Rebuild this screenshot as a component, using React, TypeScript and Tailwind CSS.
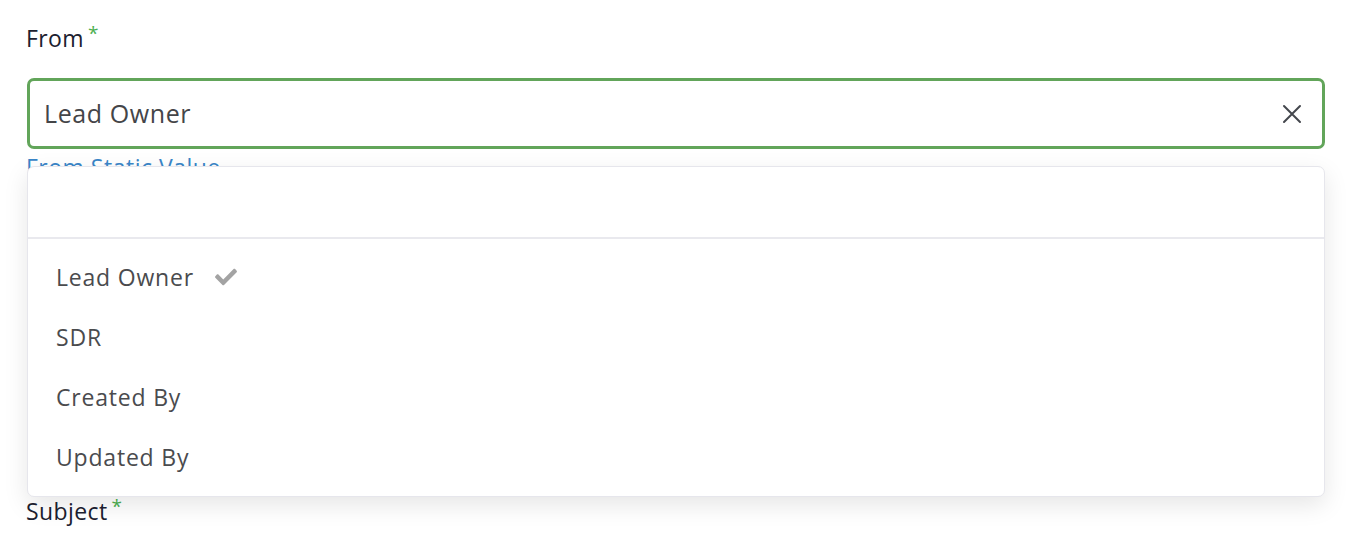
import { FaCheck } from 'react-icons/fa'

const options = ['Lead Owner', 'SDR', 'Created By', 'Updated By']

function Label({ text }: { text: string }): JSX.Element {
  return (
    <div className="flex h-[24px] items-start text-[23px] leading-none tracking-[0.4px] text-[#1c2130]">
      <span>{text}</span>
      <span className="ml-[4px] -mt-[3px] text-[19px] text-[#4caf50]">*</span>
    </div>
  )
}

export default function App(): JSX.Element {
  const selected = 'Lead Owner'

  return (
    <div className="h-[544px] w-[1356px] overflow-hidden bg-white font-['Open_Sans','Lato',sans-serif]">
      <div className="pl-[26px] pr-[31px] pt-[27px]">
        <Label text="From" />

        {/* select + dropdown */}
        <div className="relative mt-[27px]">
          <div className="ml-[1px] flex h-[71px] items-center justify-between rounded-[7px] border-[3px] border-[#62a55a] pl-[14px] pr-[20px]">
            <span className="text-[25px] tracking-[0.6px] text-[#444548]">{selected}</span>
            <svg width="20" height="20" viewBox="0 0 20 20" className="text-[#44474d]">
              <path d="M2 2 L18 18 M18 2 L2 18" stroke="currentColor" strokeWidth="2" strokeLinecap="round" />
            </svg>
          </div>
          <div className="mt-[7px] h-[40px] text-[23px] leading-none tracking-[0.5px] text-[#3a86c8]">From Static Value</div>

          <div className="absolute left-[1px] right-0 top-[88px] rounded-[7px] border border-[#e6e6ec] bg-white shadow-[0_8px_24px_rgba(0,0,0,0.10)]">
            <div className="h-[72px] border-b-2 border-[#e9e9ee]" />
            <div className="pt-[8px] pb-[9px]">
              {options.map((o) => (
                <div key={o} className="flex h-[60px] items-center pl-[28px] text-[23px] tracking-[0.8px] text-[#4a4b4e]">
                  <span>{o}</span>
                  {o === selected && <FaCheck className="ml-[20px] h-[22px] w-[24px] text-[#a3a3a3]" />}
                </div>
              ))}
            </div>
          </div>
        </div>

        <div className="mt-[304px]">
          <Label text="Subject" />
        </div>
      </div>
    </div>
  )
}
